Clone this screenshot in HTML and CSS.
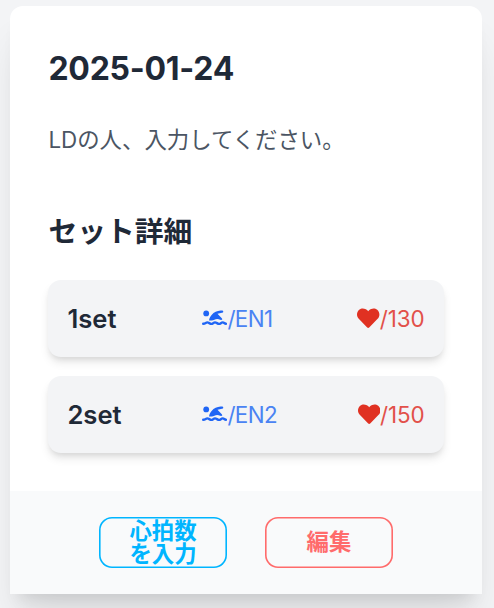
FILE: index.html
```html
<!DOCTYPE html>
<html lang="ja">
<head>
<meta charset="utf-8">
<title>2025-01-24</title>
<link rel="stylesheet" href="styles.css">
</head>
<body>
<main class="card">
  <section class="content">
    <h1 class="date">2025-01-24</h1>
    <p class="message">LDの人、入力してください。</p>
    <h2 class="subtitle">セット詳細</h2>
    <ul class="sets">
      <li class="set">
        <span class="name">1set</span>
        <span class="style"><svg class="swim" viewBox="0 0 25 16"><circle cx="4.2" cy="3.4" r="2.9"/><path d="M7 10.400C7.400 8.200 8.200 6.500 9.600 5 12 2.200 15 .8 18.600.6H20q1.300 0 1.300 1.100T20 2.800L15.500 3.700 20 8.600q1 1.400-.8 1.400-1 0-2.500-.7-1.500-.8-3 0-2 1.100-3.700 1.100Z"/><path class="wave" d="M1.200 13.700C3.500 13.700 3.800 12.400 5.300 12.400S7.800 13.900 9.300 13.900 11.500 12.400 13 12.400s2.500 1.500 4 1.500 2.200-1.500 3.700-1.500 1.600 1.300 3.300 1.300"/></svg>/EN1</span>
        <span class="rate"><svg class="heart" viewBox="0 0 512 512"><path d="M462.300 62.600C407.500 15.900 326 24.300 275.700 76.200L256 96.500l-19.700-20.300C186.100 24.300 104.500 15.900 49.700 62.600c-62.800 53.600-66.100 149.800-9.900 207.900l193.500 199.800c12.500 12.900 32.800 12.900 45.300 0l193.500-199.800c56.300-58.100 53-154.300-9.800-207.900z"/></svg>/130</span>
      </li>
      <li class="set">
        <span class="name">2set</span>
        <span class="style"><svg class="swim" viewBox="0 0 25 16"><circle cx="4.2" cy="3.4" r="2.9"/><path d="M7 10.400C7.400 8.200 8.200 6.500 9.600 5 12 2.200 15 .8 18.600.6H20q1.300 0 1.300 1.100T20 2.800L15.500 3.700 20 8.600q1 1.400-.8 1.400-1 0-2.500-.7-1.500-.8-3 0-2 1.100-3.700 1.100Z"/><path class="wave" d="M1.200 13.700C3.500 13.700 3.800 12.400 5.300 12.400S7.800 13.900 9.300 13.900 11.500 12.400 13 12.400s2.500 1.500 4 1.500 2.200-1.500 3.700-1.500 1.600 1.300 3.300 1.300"/></svg>/EN2</span>
        <span class="rate"><svg class="heart" viewBox="0 0 512 512"><path d="M462.300 62.600C407.500 15.900 326 24.300 275.700 76.200L256 96.500l-19.700-20.300C186.100 24.300 104.500 15.900 49.700 62.600c-62.800 53.600-66.100 149.800-9.900 207.900l193.500 199.800c12.500 12.900 32.800 12.900 45.300 0l193.500-199.800c56.300-58.100 53-154.300-9.800-207.900z"/></svg>/150</span>
      </li>
    </ul>
  </section>
  <footer class="actions">
    <button class="btn input">心拍数を入力</button>
    <button class="btn edit">編集</button>
  </footer>
</main>
</body>
</html>
```
FILE: styles.css
```css
* { box-sizing: border-box; margin: 0; padding: 0; }
body {
  height: 608px;
  padding: 6px 12px 0 10px;
  overflow: hidden;
  background: #f3f4f6;
  font-family: Inter, "Noto Sans CJK JP", sans-serif;
  color: #1f2937;
}
.card {
  height: 588px;
  display: flex;
  flex-direction: column;
  background: #fff;
  border-radius: 13px 13px 0 0;
  box-shadow: 0 32px 40px -8px rgb(0 0 0 / .1), 0 12.8px 16px -9.6px rgb(0 0 0 / .1);
}
.content { height: 485px; padding: 38px 38px 38px 38.4px; }
.date { padding-top: 2px; font-size: 32px; line-height: 46px; font-weight: 700; letter-spacing: -.25px; }
.message { margin-top: 30px; font-size: 22.4px; line-height: 36px; color: #4b5563; }
.subtitle { margin-top: 52px; font-size: 28.8px; line-height: 44px; font-weight: 600; }
.sets { margin-top: 26px; display: grid; gap: 19px; list-style: none; }
.set {
  height: 77px;
  padding: 0 19.5px 0 19px;
  display: grid;
  grid-template-columns: 135px 1fr auto;
  align-items: center;
  background: #f3f4f6;
  border-radius: 13px;
  box-shadow: 0 6.4px 9.6px -1.6px rgb(0 0 0 / .1), 0 3.2px 6.4px -3.2px rgb(0 0 0 / .1);
  font-size: 22.4px;
}
.name { font-size: 25.6px; font-weight: 600; }
.style, .rate { display: flex; align-items: center; margin-top: -1px; }
.style { color: #4a83f3; letter-spacing: -.6px; }
.rate { color: #e2504a; letter-spacing: -.1px; }
.swim { width: 25px; height: 16px; fill: #1f65f5; }
.wave { fill: none; stroke: #1f65f5; stroke-width: 2.4; stroke-linecap: round; }
.heart { width: 22.4px; height: 22.4px; fill: #e03122; }
.actions {
  height: 103px;
  display: flex;
  align-items: center;
  justify-content: center;
  gap: 38px;
  background: #f9fafb;
}
.btn {
  width: 128px;
  height: 51px;
  padding: 0 30px;
  border: 0;
  border-radius: 13px;
  box-shadow: inset 0 0 0 1.6px currentColor;
  background: none;
  font: 700 22.4px/22.4px Inter, "Noto Sans CJK JP", sans-serif;
}
.input { color: #00b5ff; }
.edit { color: #ff6b6b; }
```
